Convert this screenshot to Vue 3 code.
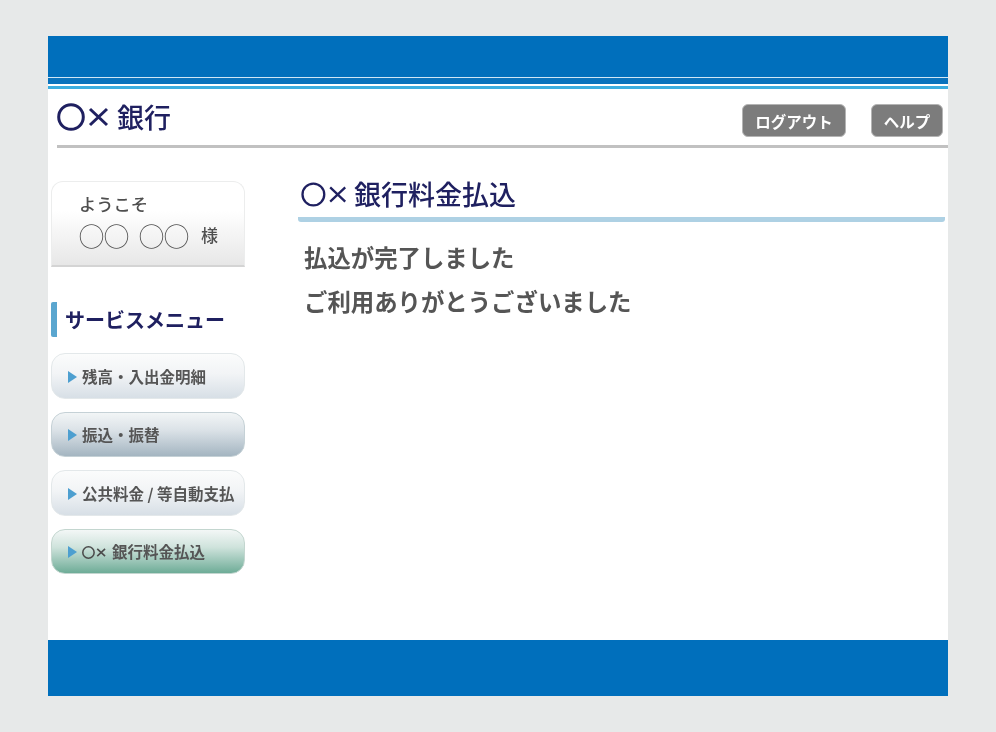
<script setup>
const menu = [
  { label: "残高・入出金明細", tone: "plain" },
  { label: "振込・振替", tone: "slate" },
  { label: "公共料金 / 等自動支払", tone: "plain" },
  { label: "銀行料金払込", tone: "green", mark: true },
];
</script>

<template>
  <div class="page">
    <div class="frame">
      <div class="top-band"></div>
      <div class="stripes">
        <div class="s-white"></div>
        <div class="s-blue"></div>
        <div class="s-white2"></div>
        <div class="s-sky"></div>
      </div>

      <header class="head">
        <div class="logo">
          <svg class="mark mark-lg" viewBox="0 0 52 28">
            <circle cx="14" cy="14" r="12.3" />
            <path d="M33 6 L50 22 M50 6 L33 22" />
          </svg>
          <span>銀行</span>
        </div>
        <div class="head-btns">
          <button class="gray-btn logout">ログアウト</button>
          <button class="gray-btn help">ヘルプ</button>
        </div>
      </header>

      <div class="body">
        <aside class="side">
          <div class="welcome">
            <div class="hello">ようこそ</div>
            <div class="who">
              <span class="name">◯◯</span>
              <span class="name">◯◯</span>
              <span class="sama">様</span>
            </div>
          </div>
          <h2 class="side-title">サービスメニュー</h2>
          <nav class="menu">
            <a v-for="item in menu" :key="item.label" class="menu-item" :class="item.tone">
              <i class="arrow"></i>
              <svg v-if="item.mark" class="mark mark-sm" viewBox="0 0 52 28">
                <circle cx="14" cy="14" r="12.3" />
                <path d="M33 6 L50 22 M50 6 L33 22" />
              </svg>
              {{ item.label }}
            </a>
          </nav>
        </aside>

        <main class="main">
          <h1 class="title">
            <svg class="mark mark-md" viewBox="0 0 52 28">
              <circle cx="14" cy="14" r="12.3" />
              <path d="M33 6 L50 22 M50 6 L33 22" />
            </svg>
            <span>銀行料金払込</span>
          </h1>
          <p class="msg">払込が完了しました</p>
          <p class="msg">ご利用ありがとうございました</p>
        </main>
      </div>

      <div class="foot"></div>
    </div>
  </div>
</template>

<style>
html,
body {
  margin: 0;
  background: #e7e9e9;
}
</style>

<style scoped>
.page {
  height: 732px;
  padding: 36px 48px;
  box-sizing: border-box;
  font-family: "Noto Sans CJK JP", "Liberation Sans", sans-serif;
}

.frame {
  width: 900px;
  height: 660px;
  background: #fff;
  display: flex;
  flex-direction: column;
  filter: blur(0.4px);
}

.top-band {
  height: 41px;
  background: #006fbc;
}

.s-white {
  height: 1px;
  background: #cfe6f5;
}

.s-blue {
  height: 6px;
  background: #0a73bd;
}

.s-white2 {
  height: 2px;
  background: #fff;
}

.s-sky {
  height: 3px;
  background: #3caee0;
}

.head {
  height: 56px;
  margin-left: 9px;
  border-bottom: 3px solid #c1c1c1;
  display: flex;
  justify-content: space-between;
  align-items: center;
}

.logo {
  display: flex;
  align-items: center;
  gap: 8px;
  color: #1f2060;
  font-size: 27px;
  font-weight: 500;
  line-height: 36px;
  margin-top: -1px;
}

.mark {
  flex: none;
  fill: none;
  stroke: #1f2060;
  stroke-width: 3;
}

.mark-lg {
  width: 52px;
  height: 28px;
}

.mark-md {
  width: 46px;
  height: 25px;
  stroke-width: 2.6;
}

.mark-sm {
  width: 24px;
  height: 13px;
  margin: 2px 6px 0 0;
  stroke: #4c4c4c;
  stroke-width: 3.4;
}

.head-btns {
  display: flex;
  gap: 25px;
  padding-right: 5px;
  margin-top: 7px;
}

.gray-btn {
  height: 33px;
  border: 1px solid #b4b4b4;
  border-radius: 6px;
  background: #7c7c7c;
  color: #fff;
  font: 700 15.5px "Noto Sans CJK JP", sans-serif;
  padding: 0;
}

.logout {
  width: 104px;
}

.help {
  width: 72px;
}

.body {
  flex: 1;
  display: flex;
}

.side {
  width: 194px;
  margin-left: 3px;
  padding-top: 33px;
}

.welcome {
  height: 86px;
  box-sizing: border-box;
  padding: 9px 0 0 27px;
  border: 1px solid #eceded;
  border-bottom: 2px solid #d4d4d4;
  border-radius: 12px 12px 0 0;
  background: linear-gradient(#fff 35%, #e7e7e7);
  color: #4f4f4f;
}

.hello {
  font-size: 17.25px;
  line-height: 26px;
  font-weight: 500;
}

.who {
  display: flex;
  align-items: center;
  gap: 10px;
  height: 36px;
  line-height: 36px;
}

.name {
  font-size: 25px;
  font-weight: 500;
}

.sama {
  font-size: 17px;
  font-weight: 500;
  margin-left: 2px;
}

.side-title {
  margin: 35px 0 16px;
  height: 35px;
  border-left: 6px solid #5aa6cf;
  border-radius: 2px;
  padding-left: 8px;
  color: #1f2060;
  font-size: 20px;
  font-weight: 700;
  line-height: 35px;
}

.menu {
  display: flex;
  flex-direction: column;
  gap: 13px;
}

.menu-item {
  height: 45.5px;
  box-sizing: border-box;
  border: 1px solid #e3e8ea;
  border-radius: 14px;
  display: flex;
  align-items: center;
  padding-left: 16px;
  color: #555;
  font-size: 15.5px;
  font-weight: 700;
  white-space: nowrap;
}

.arrow {
  width: 0;
  height: 0;
  border-left: 9px solid #4d9fd0;
  border-top: 6px solid transparent;
  border-bottom: 6px solid transparent;
  margin: 2px 5px 0 0;
}

.plain {
  background: linear-gradient(#fbfcfc, #f2f4f6 45%, #d7dfe6);
}

.slate {
  background: linear-gradient(#f2f5f6, #dbe2e7 40%, #a4b5c1);
  border-color: #c5d1d6;
}

.green {
  background: linear-gradient(#f3f7f6, #cfe3dc 40%, #6eac97);
  border-color: #c3d6cf;
}

.main {
  flex: 1;
  margin-left: 53px;
  margin-right: 3px;
  padding-top: 27px;
}

.title {
  display: flex;
  align-items: center;
  gap: 7px;
  margin: 0 0 13px;
  height: 47px;
  box-sizing: border-box;
  border-bottom: 5px solid #aed1e4;
  border-radius: 0 0 3px 3px;
  padding: 0 0 4px 3px;
  color: #1f2060;
  font-size: 27px;
  font-weight: 500;
  line-height: 38px;
}

.msg {
  margin: 0 0 0 6px;
  color: #555;
  font-size: 23.4px;
  font-weight: 700;
  line-height: 44px;
}

.foot {
  height: 56px;
  background: #006fbc;
}
</style>
